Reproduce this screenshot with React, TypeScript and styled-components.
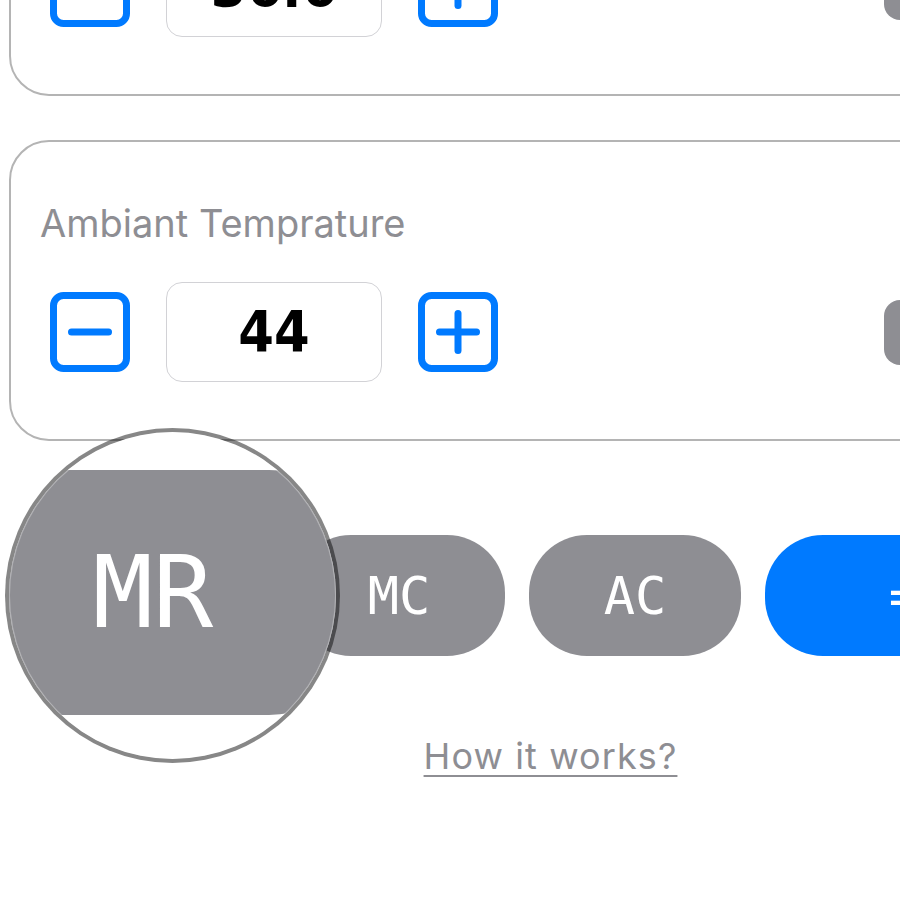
import React from "react";
import styled, { createGlobalStyle } from "styled-components";

const GlobalStyle = createGlobalStyle`
  html, body {
    margin: 0;
    padding: 0;
    background: #ffffff;
    overflow: hidden;
  }
  body {
    font-family: Inter, "Noto Sans", sans-serif;
  }
`;

const Page = styled.div`
  position: relative;
  width: 1083px;
  margin: -205px 0 0 9px;
  display: flex;
  flex-direction: column;
`;

const Card = styled.section`
  box-sizing: border-box;
  width: 100%;
  border: 2px solid #b4b4b4;
  border-radius: 40px;
  padding: 58px 29px 57px;
  display: flex;
  flex-direction: column;
  & + & {
    margin-top: 44px;
  }
`;

const Label = styled.div`
  font-family: Inter, sans-serif;
  font-size: 38px;
  line-height: 46px;
  color: #8e8e93;
  white-space: nowrap;
`;

const StepperRow = styled.div`
  margin-top: 36px;
  padding-left: 10px;
  display: flex;
  align-items: center;
  justify-content: space-between;
`;

const StepGroup = styled.div`
  display: flex;
  align-items: center;
  gap: 36px;
`;

const StepButton = styled.button`
  width: 80px;
  height: 80px;
  padding: 0;
  border: none;
  background: none;
  display: block;
  cursor: pointer;
  svg {
    display: block;
  }
`;

const ValueBox = styled.div`
  box-sizing: border-box;
  width: 216px;
  height: 100px;
  border: 1px solid #d2d2d6;
  border-radius: 16px;
  display: flex;
  align-items: center;
  justify-content: center;
  font-family: "DejaVu Sans", sans-serif;
  font-stretch: condensed;
  font-weight: 700;
  font-size: 57px;
  color: #000000;
`;

const UnitPill = styled.div`
  width: 150px;
  height: 65px;
  margin-right: 27px;
  border-radius: 16px;
  background: #8e8e93;
`;

const KeyRow = styled.div`
  position: relative;
  margin: 94px 0 0 48px;
  display: flex;
  gap: 24px;
`;

const Key = styled.button<{ $accent?: boolean; $wide?: boolean }>`
  flex: none;
  width: ${(p) => (p.$wide ? "279px" : "212px")};
  height: 121px;
  padding: 0;
  border: none;
  border-radius: 58px;
  background: ${(p) => (p.$accent ? "#007aff" : "#8e8e93")};
  color: #ffffff;
  font-family: "DejaVu Sans Mono", monospace;
  font-size: 52px;
  display: flex;
  align-items: center;
  justify-content: center;
`;

const Lens = styled.div`
  position: absolute;
  left: -52px;
  top: -107px;
  width: 335px;
  height: 335px;
  box-sizing: border-box;
  border: 4px solid rgba(0, 0, 0, 0.47);
  border-radius: 50%;
  background: #ffffff;
  background-clip: padding-box;
  overflow: hidden;
  &::after {
    content: "";
    position: absolute;
    inset: 0;
    border-radius: 50%;
    box-shadow: inset 0 0 0 1px rgba(255, 255, 255, 0.3);
  }
`;

const LensKey = styled.div`
  position: absolute;
  left: -68px;
  top: 38px;
  width: 440px;
  height: 245px;
  border-radius: 112px;
  background: #8e8e93;
  color: #ffffff;
  font-family: "DejaVu Sans Mono", monospace;
  font-size: 100px;
  display: flex;
  align-items: center;
  justify-content: center;
  padding-right: 16px;
  box-sizing: border-box;
`;

const HelpLink = styled.a`
  margin-top: 78px;
  align-self: center;
  font-family: Inter, sans-serif;
  font-size: 36px;
  letter-spacing: 1.1px;
  color: #8e8e93;
  text-decoration: underline;
  text-decoration-thickness: 2px;
  text-underline-offset: 6px;
`;

const StepIcon = ({ plus }: { plus?: boolean }) => (
  <svg width="80" height="80" viewBox="0 0 80 80">
    <rect x="3.5" y="3.5" width="73" height="73" rx="10" fill="none" stroke="#007aff" strokeWidth="7" />
    <path d="M21.5 40H58.5" stroke="#007aff" strokeWidth="7" strokeLinecap="round" />
    {plus && <path d="M40 21.5V58.5" stroke="#007aff" strokeWidth="7" strokeLinecap="round" />}
  </svg>
);

const Stepper = ({ label, value }: { label: string; value: string }) => (
  <Card>
    <Label>{label}</Label>
    <StepperRow>
      <StepGroup>
        <StepButton aria-label="decrease">
          <StepIcon />
        </StepButton>
        <ValueBox>{value}</ValueBox>
        <StepButton aria-label="increase">
          <StepIcon plus />
        </StepButton>
      </StepGroup>
      <UnitPill />
    </StepperRow>
  </Card>
);

export default function App() {
  return (
    <>
      <GlobalStyle />
      <Page>
        <Stepper label="Body Temprature" value="36.6" />
        <Stepper label="Ambiant Temprature" value="44" />
        <KeyRow>
          <Key>MR</Key>
          <Key>MC</Key>
          <Key>AC</Key>
          <Key $accent $wide>=</Key>
          <Lens>
            <LensKey>MR</LensKey>
          </Lens>
        </KeyRow>
        <HelpLink href="#">How it works?</HelpLink>
      </Page>
    </>
  );
}
